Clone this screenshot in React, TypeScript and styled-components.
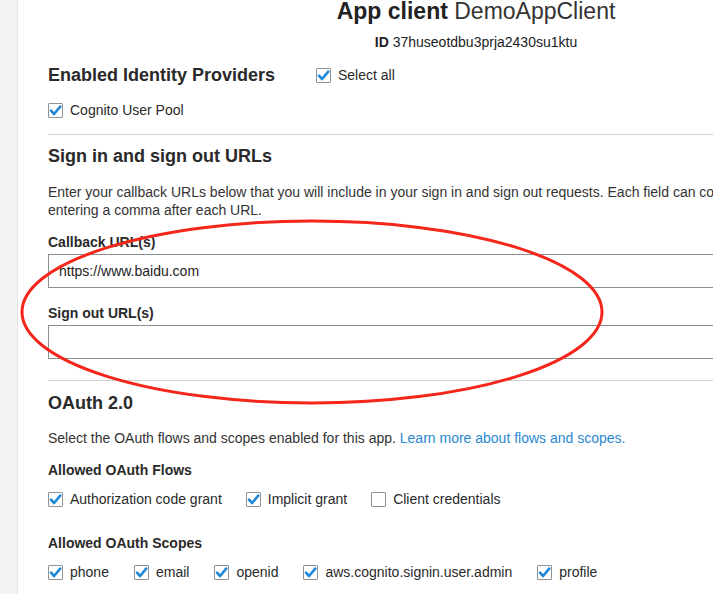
import React from "react";
import styled, { createGlobalStyle } from "styled-components";

const Global = createGlobalStyle`
  html, body { margin: 0; padding: 0; background: #fff; }
  body { font-family: "Liberation Sans", Arial, Helvetica, sans-serif; color: #333; overflow: hidden; }
  #root { width: 713px; height: 594px; overflow: hidden; position: relative; }
`;

const Page = styled.div`
  display: flex;
  width: 713px;
  height: 594px;
  overflow: hidden;
  position: relative;
`;

const SideStrip = styled.div`
  flex: 0 0 17px;
  background: #f2f3f3;
  border-right: 1px solid #e4e7e7;
`;

const Main = styled.main`
  flex: 0 0 auto;
  padding-left: 30px;
  width: 856px;
  display: flex;
  flex-direction: column;
`;

const Title = styled.h1`
  margin: 0;
  font-size: 23px;
  line-height: 22px;
  text-align: center;
  color: #222;
  font-weight: 700;
  span { font-weight: 300; color: #333; }
`;

const IdLine = styled.div`
  margin-top: 12px;
  font-size: 14px;
  line-height: 16px;
  text-align: center;
  color: #222;
  b { font-weight: 700; }
`;

const ProviderRow = styled.div`
  margin-top: 14px;
  display: flex;
  align-items: center;
`;

const SectionHeading = styled.h2<{ $mt?: number; $w?: number }>`
  margin: ${(p) => p.$mt ?? 0}px 0 0;
  font-size: 18px;
  line-height: 22px;
  font-weight: 700;
  color: #2a2a2a;
  ${(p) => (p.$w ? `width: ${p.$w}px; flex: 0 0 ${p.$w}px;` : "")}
`;

const Rule = styled.hr<{ $mt: number }>`
  margin: ${(p) => p.$mt}px 0 0;
  border: 0;
  border-top: 1px solid #cfd3d3;
  height: 0;
`;

const Para = styled.p<{ $mt: number }>`
  margin: ${(p) => p.$mt}px 0 0;
  font-size: 14px;
  line-height: 18px;
  color: #333;
  white-space: nowrap;
`;

const Link = styled.a`
  color: #2a88d0;
  text-decoration: none;
`;

const FieldLabel = styled.div<{ $mt: number }>`
  margin-top: ${(p) => p.$mt}px;
  font-size: 14px;
  line-height: 18px;
  font-weight: 700;
  color: #2a2a2a;
`;

const TextInput = styled.input`
  margin-top: 3px;
  box-sizing: border-box;
  width: 100%;
  height: 34px;
  border: 1px solid #8a9091;
  border-radius: 0;
  padding: 0 10px;
  font-family: "Liberation Sans", Arial, sans-serif;
  font-size: 14px;
  color: #222;
  background: #fff;
  outline: none;
`;

const CheckRow = styled.div<{ $mt: number; $gap: number }>`
  margin-top: ${(p) => p.$mt}px;
  display: flex;
  align-items: center;
  gap: ${(p) => p.$gap}px;
`;

const CheckItem = styled.label`
  display: inline-flex;
  align-items: center;
  gap: 7px;
  font-size: 14px;
  line-height: 18px;
  color: #2a2a2a;
  white-space: nowrap;
`;

const Box = styled.span`
  box-sizing: border-box;
  width: 15px;
  height: 15px;
  flex: 0 0 15px;
  border: 1px solid #8d9394;
  border-radius: 1px;
  background: #fff;
  display: inline-flex;
  align-items: center;
  justify-content: center;
`;

const Overlay = styled.svg`
  position: absolute;
  left: 0;
  top: 0;
  pointer-events: none;
`;

const Check = ({ checked, children }: { checked?: boolean; children: React.ReactNode }) => (
  <CheckItem>
    <Box>
      {checked && (
        <svg width="13" height="13" viewBox="0 0 13 13">
          <path d="M2 6.6 L5.1 10 L11.2 2.6" fill="none" stroke="#1f88d6" strokeWidth="2.6" strokeLinecap="round" strokeLinejoin="round" />
        </svg>
      )}
    </Box>
    {children}
  </CheckItem>
);

export default function App() {
  return (
    <>
      <Global />
      <Page>
        <SideStrip />
        <Main>
          <Title>
            App client <span>DemoAppClient</span>
          </Title>
          <IdLine>
            <b>ID</b> 37huseotdbu3prja2430su1ktu
          </IdLine>
          <ProviderRow>
            <SectionHeading $w={268}>Enabled Identity Providers</SectionHeading>
            <Check checked>Select all</Check>
          </ProviderRow>
          <CheckRow $mt={15} $gap={25}>
            <Check checked>Cognito User Pool</Check>
          </CheckRow>
          <Rule $mt={15} />
          <SectionHeading $mt={10}>Sign in and sign out URLs</SectionHeading>
          <Para $mt={16}>
            Enter your callback URLs below that you will include in your sign in and sign out requests. Each field can contain multiple URLs by
            <br />
            entering a comma after each URL.
          </Para>
          <FieldLabel $mt={14}>Callback URL(s)</FieldLabel>
          <TextInput defaultValue="https://www.baidu.com" />
          <FieldLabel $mt={16}>Sign out URL(s)</FieldLabel>
          <TextInput defaultValue="" />
          <Rule $mt={21} />
          <SectionHeading $mt={11}>OAuth 2.0</SectionHeading>
          <Para $mt={15}>
            Select the OAuth flows and scopes enabled for this app. <Link href="#">Learn more about flows and scopes.</Link>
          </Para>
          <FieldLabel $mt={14}>Allowed OAuth Flows</FieldLabel>
          <CheckRow $mt={11} $gap={24}>
            <Check checked>Authorization code grant</Check>
            <Check checked>Implicit grant</Check>
            <Check>Client credentials</Check>
          </CheckRow>
          <FieldLabel $mt={26}>Allowed OAuth Scopes</FieldLabel>
          <CheckRow $mt={11} $gap={25}>
            <Check checked>phone</Check>
            <Check checked>email</Check>
            <Check checked>openid</Check>
            <Check checked>aws.cognito.signin.user.admin</Check>
            <Check checked>profile</Check>
          </CheckRow>
        </Main>
        <Overlay width="713" height="594" viewBox="0 0 713 594">
          <ellipse cx="312" cy="312" rx="290" ry="91" fill="none" stroke="#f5271b" strokeWidth="3" />
        </Overlay>
      </Page>
    </>
  );
}
